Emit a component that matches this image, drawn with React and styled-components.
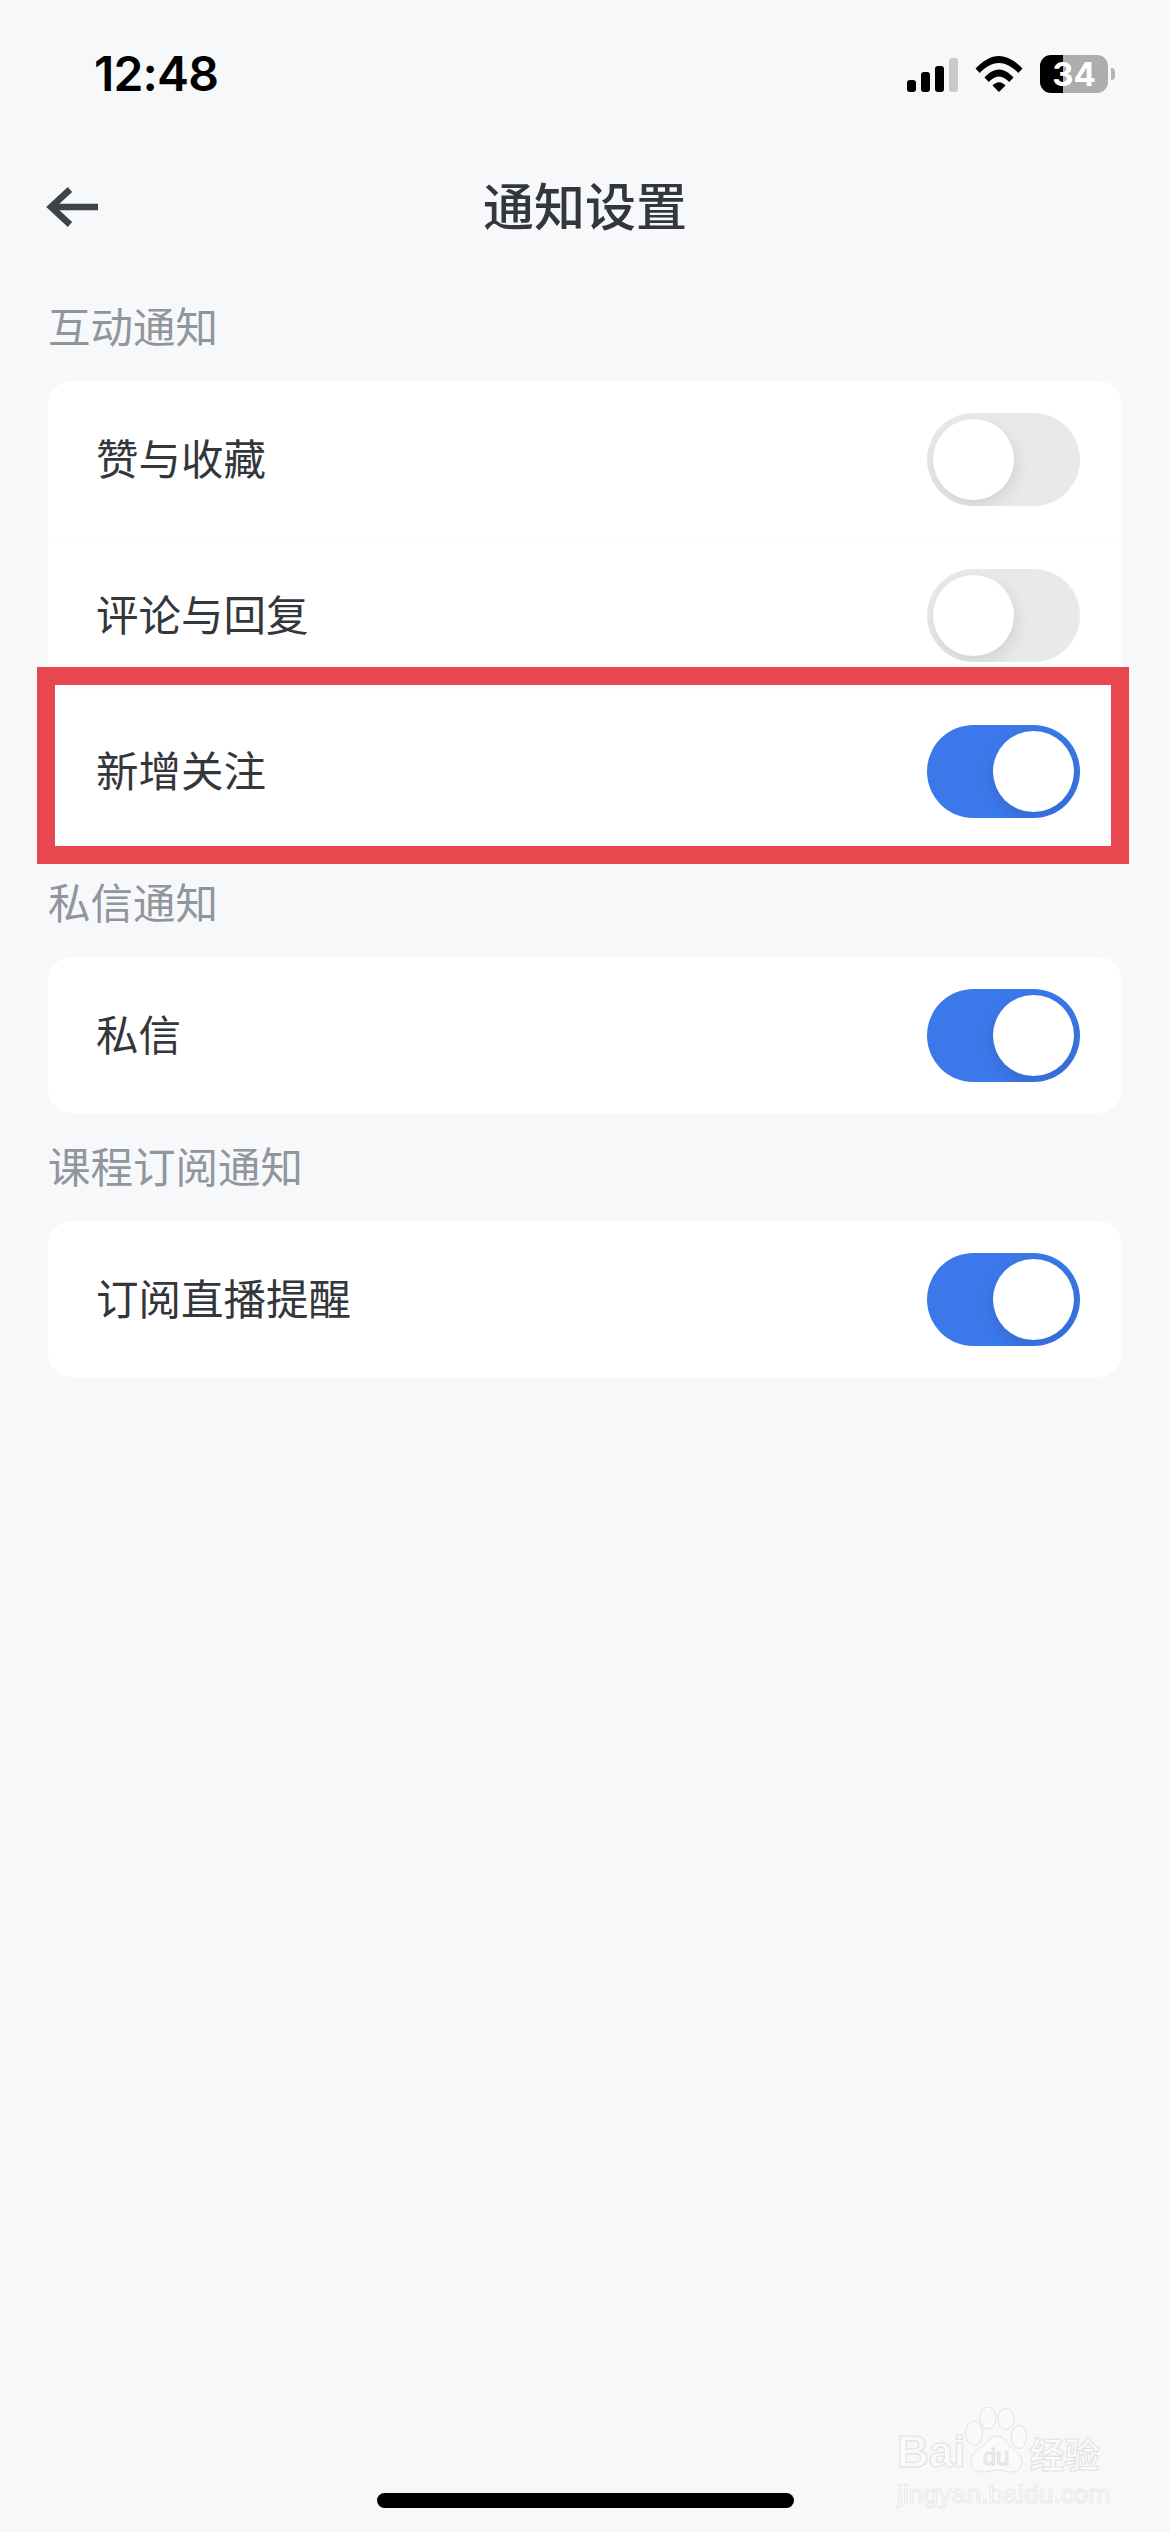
import React from "react";
import styled, { createGlobalStyle } from "styled-components";

const CJK = `"Noto Sans CJK SC", "Noto Sans", sans-serif`;

const Global = createGlobalStyle`
  html, body { margin: 0; padding: 0; background: #f7f8fa; }
  * { box-sizing: border-box; }
`;

const Page = styled.div`
  position: relative;
  width: 1170px;
  height: 2532px;
  display: flex;
  flex-direction: column;
  background: #f7f8fa;
  font-family: ${CJK};
  overflow: hidden;
`;

const StatusBar = styled.header`
  height: 147px;
  padding: 55px 55px 0 94px;
  display: flex;
  justify-content: space-between;
  align-items: flex-start;
`;

const Clock = styled.span`
  font: 600 48px/38px Inter, "Liberation Sans", sans-serif;
  letter-spacing: -0.8px;
  color: #000;
`;

const StatusIcons = styled.div`
  display: flex;
  align-items: center;
  height: 37px;
  gap: 17px;
`;

const Signal = styled.div`
  display: flex;
  align-items: flex-end;
  gap: 5px;
  height: 34px;
  margin-top: 2px;
`;

const SignalBar = styled.span`
  width: 9px;
  height: ${(p) => p.$h}px;
  border-radius: 3px;
  background: ${(p) => (p.$dim ? "#c9c9c9" : "#000")};
`;

const Battery = styled.div`
  display: flex;
  align-items: center;
  gap: 3px;
`;

const BatteryBody = styled.div`
  width: 68px;
  height: 38px;
  border-radius: 11px;
  display: flex;
  align-items: center;
  justify-content: center;
  background: linear-gradient(90deg, #000 0 23px, #adadad 23px);
  color: #fff;
  font: 700 33px/38px Inter, "Liberation Sans", sans-serif;
`;

const BatteryTip = styled.span`
  width: 4px;
  height: 12px;
  border-radius: 0 6px 6px 0;
  background: #b4b4b4;
`;

const NavBar = styled.nav`
  height: 120px;
  padding: 0 46px;
  display: grid;
  grid-template-columns: 1fr auto 1fr;
  align-items: center;
`;

const Title = styled.h1`
  margin: 0 0 6px;
  font-size: 51px;
  line-height: 60px;
  font-weight: 500;
  color: #33363b;
`;

const Content = styled.main`
  padding: 6px 48px 0;
`;

const SectionLabel = styled.h2`
  margin: 0;
  height: 108px;
  padding-bottom: 6px;
  display: flex;
  align-items: center;
  font-size: 42.5px;
  font-weight: 400;
  color: #91959c;
`;

const Card = styled.section`
  background: #fff;
  border-radius: 24px;
`;

const Row = styled.div`
  position: relative;
  height: 156px;
  padding: 0 42px 0 48px;
  display: flex;
  align-items: center;
  justify-content: space-between;
  font-size: 42.5px;
  color: #33363b;
  & + & { border-top: 1px solid #fafafb; }
`;

const RowLabel = styled.span`
  margin-bottom: 6px;
`;

const Track = styled.div`
  position: relative;
  width: 153px;
  height: 93px;
  border-radius: 47px;
  overflow: hidden;
  background: ${(p) => (p.$on ? "#3b78ea" : "#e8e9eb")};
`;

const Knob = styled.span`
  position: absolute;
  top: 6px;
  left: ${(p) => (p.$on ? "66px" : "6px")};
  width: 81px;
  height: 81px;
  border-radius: 50%;
  background: #fff;
  box-shadow: 2px 6px 16px rgba(0, 0, 0, ${(p) => (p.$on ? 0.12 : 0.1)});
`;

const Highlight = styled.div`
  position: absolute;
  left: -11px;
  top: -27px;
  width: 1092px;
  height: 197px;
  border: 18px solid #e9474f;
  pointer-events: none;
`;

const HomeIndicator = styled.div`
  width: 417px;
  height: 15px;
  margin: auto auto 24px;
  border-radius: 8px;
  background: #000;
`;

const Watermark = styled.div`
  position: absolute;
  left: 897px;
  top: 2407px;
  width: 212px;
  display: flex;
  flex-direction: column;
  color: #fafafb;
  -webkit-text-stroke: 1px #e0e1e4;
`;

const BrandLine = styled.div`
  display: flex;
  align-items: flex-end;
  height: 66px;
`;

const BrandLatin = styled.span`
  font: 700 44px/40px "Liberation Sans", sans-serif;
  margin-bottom: 1px;
`;

const BrandCjk = styled.span`
  font: 700 35px/40px ${CJK};
  margin-left: 2px;
`;

const BrandUrl = styled.span`
  margin-top: 8px;
  font: 400 26.5px/26px "Liberation Sans", sans-serif;
  white-space: nowrap;
  -webkit-text-stroke: 0.7px #e2e3e6;
`;

const WifiIcon = () => (
  <svg width="48" height="36" viewBox="0 0 48 36">
    <path d="M0.5 12.5C6.5 6.3 14.8 0 24 0s17.5 6.3 23.5 12.5l-4.2 4.4C38.300 12 31.500 7 24 7S9.700 12 4.700 16.900z" />
    <path d="M9.500 21.500C13 17.800 18.200 13.500 24 13.500s11 4.300 14.500 8l-4.300 4.400C31.500 23.200 28 20.500 24 20.500s-7.500 2.700-10.200 5.400z" />
    <path d="M17.500 29.500c1.800-1.800 4-3.200 6.500-3.200s4.700 1.400 6.500 3.200L24 36z" />
  </svg>
);

const BackArrow = () => (
  <svg width="52" height="40" viewBox="0 0 52 40" fill="none" stroke="#3f4347" strokeWidth="6.5" style={{ display: "block" }}>
    <path d="M52 20H5" />
    <path d="M24 2.500L5 20l19 17.500" />
  </svg>
);

const PawIcon = () => (
  <svg width="62" height="66" viewBox="0 0 62 66" fill="#fafafb" stroke="#e0e1e4" strokeWidth="1">
    <ellipse cx="23" cy="11" rx="8" ry="11" />
    <ellipse cx="41" cy="12" rx="8" ry="10.500" />
    <ellipse cx="9" cy="26" rx="8.500" ry="12" />
    <ellipse cx="54" cy="30" rx="7.500" ry="11.500" />
    <path d="M32 29c-6 0-9 5-13 9-5 4-13 8-13 17 0 7 6 10 12 10 5 0 9-2 14-2s9 2 14 2c6 0 11-4 11-10 0-8-8-12-13-17-4-4-6-9-12-9z" />
    <text x="31" y="58" textAnchor="middle" fontFamily="'Liberation Sans', sans-serif" fontSize="24" fill="#f1f1f3">du</text>
  </svg>
);

const Switch = ({ on }) => (
  <Track $on={on}>
    <Knob $on={on} />
  </Track>
);

const SECTIONS = [
  {
    title: "互动通知",
    rows: [
      { label: "赞与收藏", on: false },
      { label: "评论与回复", on: false },
      { label: "新增关注", on: true, marked: true },
    ],
  },
  { title: "私信通知", rows: [{ label: "私信", on: true }] },
  { title: "课程订阅通知", rows: [{ label: "订阅直播提醒", on: true }] },
];

export default function App() {
  return (
    <Page>
      <Global />
      <StatusBar>
        <Clock>12:48</Clock>
        <StatusIcons>
          <Signal>
            <SignalBar $h={12} />
            <SignalBar $h={20} />
            <SignalBar $h={26} />
            <SignalBar $h={34} $dim />
          </Signal>
          <WifiIcon />
          <Battery>
            <BatteryBody>34</BatteryBody>
            <BatteryTip />
          </Battery>
        </StatusIcons>
      </StatusBar>
      <NavBar>
        <BackArrow />
        <Title>通知设置</Title>
      </NavBar>
      <Content>
        {SECTIONS.map((section) => (
          <React.Fragment key={section.title}>
            <SectionLabel>{section.title}</SectionLabel>
            <Card>
              {section.rows.map((row) => (
                <Row key={row.label}>
                  <RowLabel>{row.label}</RowLabel>
                  <Switch on={row.on} />
                  {row.marked && <Highlight />}
                </Row>
              ))}
            </Card>
          </React.Fragment>
        ))}
      </Content>
      <HomeIndicator />
      <Watermark>
        <BrandLine>
          <BrandLatin>Bai</BrandLatin>
          <PawIcon />
          <BrandCjk>经验</BrandCjk>
        </BrandLine>
        <BrandUrl>jingyan.baidu.com</BrandUrl>
      </Watermark>
    </Page>
  );
}
